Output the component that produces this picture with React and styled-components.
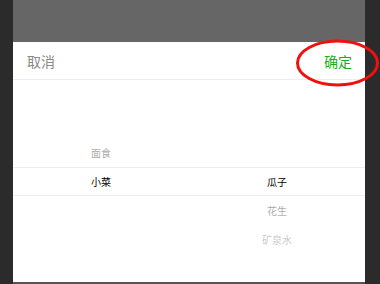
import React from "react";
import styled, { createGlobalStyle } from "styled-components";

const Global = createGlobalStyle`
  html, body { margin: 0; padding: 0; background: #2b2b2b; }
  body { font-family: "Noto Sans CJK SC", "Noto Sans", sans-serif; }
  * { box-sizing: border-box; }
`;

const Frame = styled.div`
  position: relative;
  margin: 0 15px 0 13px;
  height: 284px;
  display: flex;
  flex-direction: column;
  background: #555;
`;

const Backdrop = styled.div`
  height: 42px;
  background: #666;
`;

const Sheet = styled.div`
  height: 240px;
  background: #fff;
  display: flex;
  flex-direction: column;
  overflow: hidden;
`;

const Header = styled.div`
  height: 38px;
  flex: none;
  display: flex;
  align-items: center;
  justify-content: space-between;
  padding: 0 13px 0 14px;
  border-bottom: 1px solid #eee;
  font-size: 14px;
`;

const Action = styled.span`
  color: ${(p) => (p.$primary ? "#1aad19" : "#888")};
  line-height: 1;
`;

const ROW = 29;

const Picker = styled.div`
  position: relative;
  height: ${ROW * 7}px;
  display: flex;
  flex: none;
`;

const Column = styled.div`
  flex: 1;
  display: flex;
  flex-direction: column;
`;

const Item = styled.div`
  height: ${ROW}px;
  line-height: ${ROW}px;
  text-align: center;
  font-size: 10px;
  color: #000;
`;

const Mask = styled.div`
  position: absolute;
  inset: 0;
  pointer-events: none;
  background-image: linear-gradient(180deg, rgba(255,255,255,0.95), rgba(255,255,255,0.6)),
    linear-gradient(0deg, rgba(255,255,255,0.95), rgba(255,255,255,0.6));
  background-position: top, bottom;
  background-size: 100% ${ROW * 3}px;
  background-repeat: no-repeat;
`;

const Indicator = styled.div`
  position: absolute;
  left: 0;
  right: 0;
  top: ${ROW * 3}px;
  height: ${ROW}px;
  border-top: 1px solid #eee;
  border-bottom: 1px solid #eee;
  pointer-events: none;
`;

const Highlight = styled.svg`
  position: absolute;
  left: 282px;
  top: 38px;
  overflow: visible;
`;

const columns = [
  { items: ["面食", "小菜"], selected: 1 },
  { items: ["瓜子", "花生", "矿泉水"], selected: 0 },
];

function PickerColumn({ items, selected }) {
  const offset = 3 - selected;
  return (
    <Column style={{ paddingTop: offset * ROW }}>
      {items.map((t) => (
        <Item key={t}>{t}</Item>
      ))}
    </Column>
  );
}

export default function App() {
  return (
    <>
      <Global />
      <Frame>
        <Backdrop />
        <Sheet>
          <Header>
            <Action>取消</Action>
            <Action $primary>确定</Action>
          </Header>
          <Picker>
            {columns.map((c, i) => (
              <PickerColumn key={i} items={c.items} selected={c.selected} />
            ))}
            <Mask />
            <Indicator />
          </Picker>
        </Sheet>
        <Highlight width="86" height="50" viewBox="0 0 86 50">
          <ellipse cx="42.5" cy="25" rx="40" ry="22" fill="none" stroke="#f01010" strokeWidth="3" />
        </Highlight>
      </Frame>
    </>
  );
}
